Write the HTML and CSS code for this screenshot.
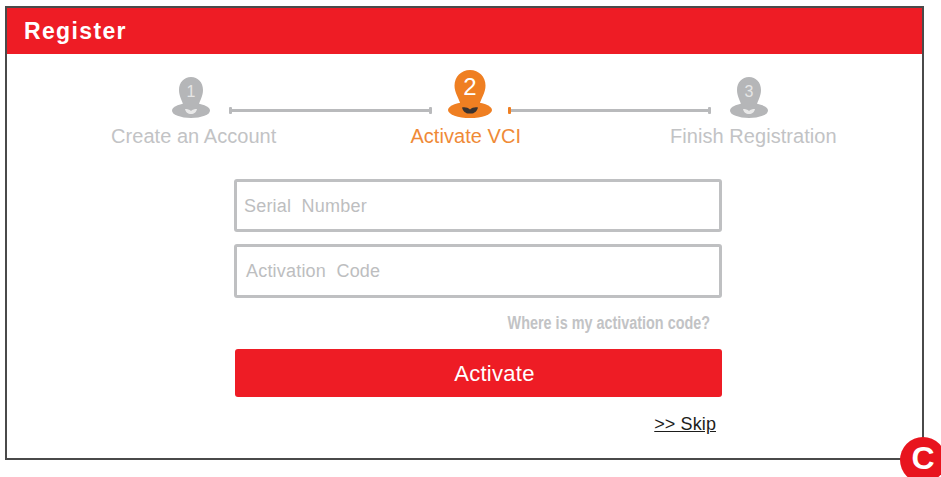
FILE: index.html
```html
<!DOCTYPE html>
<html lang="en">
<head>
<meta charset="utf-8">
<title>Register</title>
<link rel="stylesheet" href="styles.css">
</head>
<body>
<div class="frame">
  <header class="title-bar">Register</header>
  <section class="steps">
    <div class="pins">
      <svg class="pin pin-small" viewBox="0 0 38 41" aria-hidden="true">
        <ellipse class="grey" cx="19" cy="33.5" rx="19" ry="7.5"/>
        <path class="grey" d="M19 0C26 0 31 5.5 31 13C31 19 28 23 26 30L12 30C10 23 7 19 7 13C7 5.5 12 0 19 0Z"/>
        <path class="smile-light" d="M13 32C15.500 32 17.500 32.500 19 34C20.500 32.500 22.500 32 25 32C24.500 35 22 37 19 37C16 37 13.500 35 13 32Z"/>
        <text class="num num-small" x="19" y="20">1</text>
      </svg>
      <span class="line"></span>
      <svg class="pin pin-big" viewBox="0 0 44 48" aria-hidden="true">
        <ellipse class="orange" cx="22" cy="40" rx="22" ry="8"/>
        <path class="orange" d="M22 0C31 0 37.500 7 37.500 15.500C37.500 22 34 27 31 35L13 35C10 27 6.500 22 6.500 15.500C6.500 7 13 0 22 0Z"/>
        <path class="smile-dark" d="M14 37.500C17 37 20 37.500 22 39.500C24 37.500 27 37 30 37.500C29 41.500 26 44 22 43.500C18 44 15 41.500 14 37.500Z"/>
        <text class="num num-big" x="22" y="25">2</text>
      </svg>
      <span class="line line-active"></span>
      <svg class="pin pin-small" viewBox="0 0 38 41" aria-hidden="true">
        <ellipse class="grey" cx="19" cy="33.5" rx="19" ry="7.500"/>
        <path class="grey" d="M19 0C26 0 31 5.500 31 13C31 19 28 23 26 30L12 30C10 23 7 19 7 13C7 5.500 12 0 19 0Z"/>
        <path class="smile-light" d="M13 32C15.500 32 17.500 32.500 19 34C20.500 32.500 22.500 32 25 32C24.500 35 22 37 19 37C16 37 13.500 35 13 32Z"/>
        <text class="num num-small" x="19" y="20">3</text>
      </svg>
    </div>
    <div class="labels">
      <span class="label">Create an Account</span>
      <span class="label label-active">Activate VCI</span>
      <span class="label">Finish Registration</span>
    </div>
  </section>
  <form class="form">
    <div class="field">Serial&nbsp; Number</div>
    <div class="field field-second">Activation&nbsp; Code</div>
    <a class="help">Where is my activation code?</a>
    <div class="button">Activate</div>
    <a class="skip">&gt;&gt; Skip</a>
  </form>
  <div class="badge"><span>C</span></div>
</div>
</body>
</html>
```

FILE: styles.css
```css
* { box-sizing: border-box; }

html, body {
  margin: 0;
  height: 477px;
  overflow: hidden;
  background: #fff;
}

body {
  padding: 6px 0 0 5px;
  font-family: "Liberation Sans", Arial, sans-serif;
}

.frame {
  position: relative;
  width: 919px;
  height: 454px;
  border: 2px solid #4a4a4a;
  background: #fff;
}

.title-bar {
  height: 46px;
  padding-left: 17px;
  background: #ee1c25;
  color: #fff;
  font-size: 23px;
  font-weight: 700;
  letter-spacing: 1.35px;
  line-height: 46px;
}

.steps {
  padding-top: 16px;
}

.pins {
  display: flex;
  align-items: flex-start;
  padding-left: 165px;
}

.pin { display: block; flex: none; }
.pin-small { width: 38px; height: 41px; margin-top: 7px; }
.pin-big { width: 44px; height: 48px; margin-left: 16px; margin-right: 16px; }
.pin-small:last-child { margin-left: 19px; }

.grey { fill: #b5b6b8; }
.orange { fill: #ef7f22; }
.smile-light { fill: #e9e9e9; }
.smile-dark { fill: #3a3330; }

.num {
  fill: #e6e6e6;
  font-family: "Liberation Sans", Arial, sans-serif;
  text-anchor: middle;
}
.num-small { font-size: 16px; }
.num-big { font-size: 24px; fill: #fff; }

.line {
  position: relative;
  flex: none;
  width: 203px;
  height: 3px;
  margin-top: 39px;
  margin-left: 19px;
  background: #b9babc;
}
.line::before,
.line::after {
  content: "";
  position: absolute;
  top: -2px;
  width: 3px;
  height: 7px;
  border-radius: 1px;
  background: #b9babc;
}
.line::before { left: 0; }
.line::after { right: 0; }

.line-active { margin-left: 0; }
.line-active::before { background: #ef7f22; }

.labels {
  display: flex;
  margin-top: 6px;
  padding-left: 104px;
  height: 24px;
}

.label {
  color: #c2c3c5;
  font-size: 20px;
  letter-spacing: 0.05px;
  line-height: 24px;
  white-space: nowrap;
}
.label:nth-child(2) { margin-left: 134px; }
.label:nth-child(3) { margin-left: 149px; }
.label-active { color: #ef8a37; }

.form {
  display: flex;
  flex-direction: column;
  width: 488px;
  margin: 31px 0 0 227px;
}

.field {
  height: 53px;
  padding-left: 7px;
  border: 3px solid #bfc0c2;
  border-radius: 3px;
  color: #bdbec0;
  font-size: 18px;
  letter-spacing: 0.2px;
  line-height: 48px;
}

.field-second {
  height: 54px;
  margin-top: 12px;
  padding-left: 9px;
}

.help {
  align-self: flex-end;
  margin-top: 13px;
  margin-right: 12px;
  color: #c2c3c5;
  font-size: 18px;
  font-weight: 700;
  line-height: 24px;
  white-space: nowrap;
  transform: scaleX(0.8);
  transform-origin: right center;
}

.button {
  height: 48px;
  margin-top: 14px;
  margin-left: 1px;
  padding-left: 32px;
  border-radius: 3px;
  background: #ee1c25;
  color: #fff;
  font-size: 22px;
  letter-spacing: 0.3px;
  line-height: 49px;
  text-align: center;
}

.skip {
  align-self: flex-end;
  margin-top: 16px;
  margin-right: 6px;
  color: #1d1d1b;
  font-size: 18px;
  letter-spacing: 0.1px;
  line-height: 22px;
  text-decoration: underline;
  white-space: nowrap;
}

.badge {
  position: absolute;
  left: 893px;
  top: 429px;
  display: flex;
  align-items: center;
  justify-content: center;
  width: 46px;
  height: 46px;
  padding-bottom: 4px;
  border-radius: 50%;
  background: #e8141e;
  color: #fff;
  font-size: 32px;
  font-weight: 700;
  line-height: 32px;
}
```
